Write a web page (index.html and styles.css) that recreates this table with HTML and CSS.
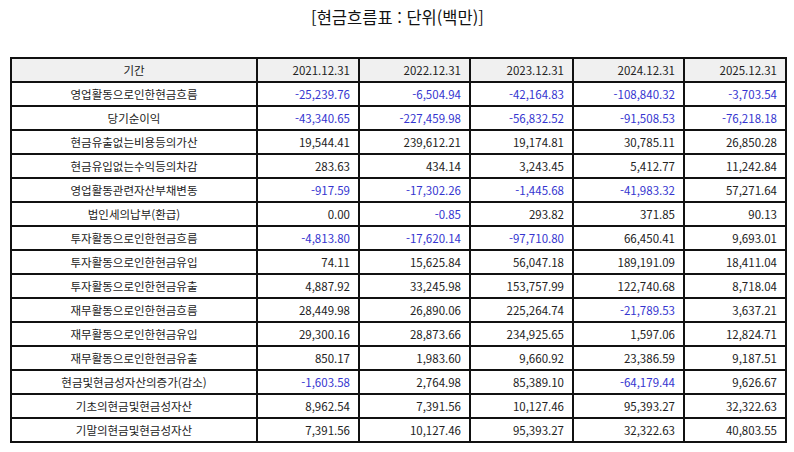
FILE: index.html
```html
<!DOCTYPE html>
<html lang="ko">
<head>
<meta charset="utf-8">
<link rel="stylesheet" href="styles.css">
</head>
<body>
<div class="page">
  <h1 class="title">[현금흐름표 : 단위(백만)]</h1>
  <table class="cf">
    <colgroup>
      <col class="c-label"><col class="c-a"><col class="c-b"><col class="c-a2"><col class="c-b"><col class="c-a">
    </colgroup>
    <thead>
      <tr><th class="label">기간</th><th>2021.12.31</th><th>2022.12.31</th><th>2023.12.31</th><th>2024.12.31</th><th>2025.12.31</th></tr>
    </thead>
    <tbody>
      <tr><td class="label">영업활동으로인한현금흐름</td><td class="neg">-25,239.76</td><td class="neg">-6,504.94</td><td class="neg">-42,164.83</td><td class="neg">-108,840.32</td><td class="neg">-3,703.54</td></tr>
      <tr><td class="label">당기순이익</td><td class="neg">-43,340.65</td><td class="neg">-227,459.98</td><td class="neg">-56,832.52</td><td class="neg">-91,508.53</td><td class="neg">-76,218.18</td></tr>
      <tr><td class="label">현금유출없는비용등의가산</td><td>19,544.41</td><td>239,612.21</td><td>19,174.81</td><td>30,785.11</td><td>26,850.28</td></tr>
      <tr><td class="label">현금유입없는수익등의차감</td><td>283.63</td><td>434.14</td><td>3,243.45</td><td>5,412.77</td><td>11,242.84</td></tr>
      <tr><td class="label">영업활동관련자산부채변동</td><td class="neg">-917.59</td><td class="neg">-17,302.26</td><td class="neg">-1,445.68</td><td class="neg">-41,983.32</td><td>57,271.64</td></tr>
      <tr><td class="label">법인세의납부(환급)</td><td>0.00</td><td class="neg">-0.85</td><td>293.82</td><td>371.85</td><td>90.13</td></tr>
      <tr><td class="label">투자활동으로인한현금흐름</td><td class="neg">-4,813.80</td><td class="neg">-17,620.14</td><td class="neg">-97,710.80</td><td>66,450.41</td><td>9,693.01</td></tr>
      <tr><td class="label">투자활동으로인한현금유입</td><td>74.11</td><td>15,625.84</td><td>56,047.18</td><td>189,191.09</td><td>18,411.04</td></tr>
      <tr><td class="label">투자활동으로인한현금유출</td><td>4,887.92</td><td>33,245.98</td><td>153,757.99</td><td>122,740.68</td><td>8,718.04</td></tr>
      <tr><td class="label">재무활동으로인한현금흐름</td><td>28,449.98</td><td>26,890.06</td><td>225,264.74</td><td class="neg">-21,789.53</td><td>3,637.21</td></tr>
      <tr><td class="label">재무활동으로인한현금유입</td><td>29,300.16</td><td>28,873.66</td><td>234,925.65</td><td>1,597.06</td><td>12,824.71</td></tr>
      <tr><td class="label">재무활동으로인한현금유출</td><td>850.17</td><td>1,983.60</td><td>9,660.92</td><td>23,386.59</td><td>9,187.51</td></tr>
      <tr><td class="label">현금및현금성자산의증가(감소)</td><td class="neg">-1,603.58</td><td>2,764.98</td><td>85,389.10</td><td class="neg">-64,179.44</td><td>9,626.67</td></tr>
      <tr><td class="label">기초의현금및현금성자산</td><td>8,962.54</td><td>7,391.56</td><td>10,127.46</td><td>95,393.27</td><td>32,322.63</td></tr>
      <tr><td class="label">기말의현금및현금성자산</td><td>7,391.56</td><td>10,127.46</td><td>95,393.27</td><td>32,322.63</td><td>40,803.55</td></tr>
    </tbody>
  </table>
</div>
</body>
</html>
```

FILE: styles.css
```css
html, body {
  margin: 0;
  padding: 0;
  background: #ffffff;
}
body {
  font-family: "Noto Sans CJK KR", "Noto Sans", sans-serif;
  color: #222222;
}
.page {
  width: 794px;
  height: 452px;
  padding: 0 9px 0 10px;
  box-sizing: border-box;
}
.title {
  margin: 0;
  padding-top: 5px;
  height: 57px;
  box-sizing: border-box;
  text-align: center;
  font-size: 16.5px;
  font-weight: 400;
  line-height: 24px;
  color: #111111;
}
.cf {
  width: 775px;
  border-collapse: collapse;
  table-layout: fixed;
  font-size: 11.5px;
}
.c-label { width: 246px; }
.c-a { width: 102px; }
.c-a2 { width: 103px; }
.c-b { width: 111px; }
.cf th, .cf td {
  border: 2px solid #111111;
  height: 24px;
  padding: 0 8px 0 4px;
  box-sizing: border-box;
  text-align: right;
  font-weight: 400;
  white-space: nowrap;
  line-height: 14px;
}
.cf thead th {
  background: #f0f0f0;
}
.cf .label {
  text-align: center;
  padding: 0 4px;
}
.cf .neg {
  color: #3535d0;
}
```
